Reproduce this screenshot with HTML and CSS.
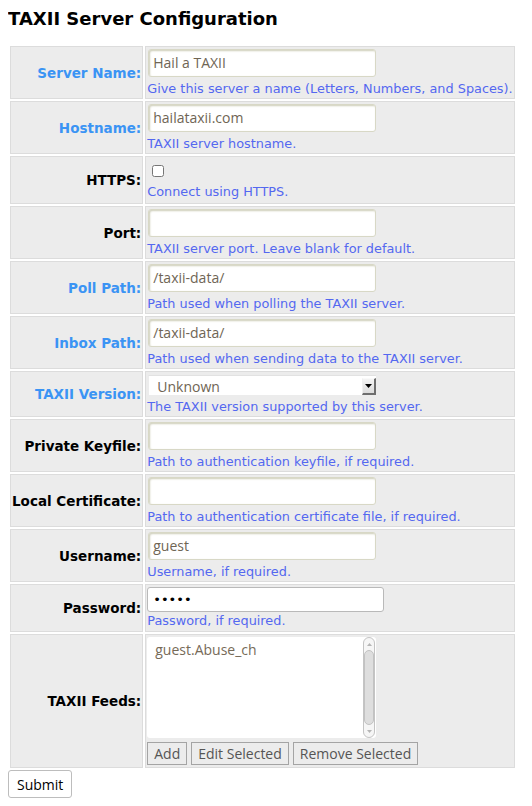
FILE: index.html
```html
<!DOCTYPE html>
<html>
<head>
<meta charset="utf-8">
<title>TAXII Server Configuration</title>
<link rel="stylesheet" href="styles.css">
</head>
<body>
<h1 class="title">TAXII Server Configuration</h1>
<form class="config-form">
<table class="config">
<tr>
<th class="label req">Server Name:</th>
<td class="field"><input class="text" type="text" value="Hail a TAXII"><div class="hint">Give this server a name (Letters, Numbers, and Spaces).</div></td>
</tr>
<tr>
<th class="label req">Hostname:</th>
<td class="field"><input class="text" type="text" value="hailataxii.com"><div class="hint">TAXII server hostname.</div></td>
</tr>
<tr>
<th class="label">HTTPS:</th>
<td class="field"><input class="check" type="checkbox"><div class="hint hint-check">Connect using HTTPS.</div></td>
</tr>
<tr>
<th class="label">Port:</th>
<td class="field"><input class="text" type="text" value=""><div class="hint">TAXII server port. Leave blank for default.</div></td>
</tr>
<tr>
<th class="label req">Poll Path:</th>
<td class="field"><input class="text" type="text" value="/taxii-data/"><div class="hint">Path used when polling the TAXII server.</div></td>
</tr>
<tr>
<th class="label req">Inbox Path:</th>
<td class="field"><input class="text" type="text" value="/taxii-data/"><div class="hint">Path used when sending data to the TAXII server.</div></td>
</tr>
<tr>
<th class="label req">TAXII Version:</th>
<td class="field">
<div class="select"><span class="select-value">Unknown</span><span class="select-arrow"><svg width="7" height="4" viewBox="0 0 7 4"><path d="M0 0H7L3.5 4Z" fill="#000"/></svg></span></div>
<div class="hint">The TAXII version supported by this server.</div></td>
</tr>
<tr>
<th class="label">Private Keyfile:</th>
<td class="field"><input class="text" type="text" value=""><div class="hint">Path to authentication keyfile, if required.</div></td>
</tr>
<tr>
<th class="label">Local Certificate:</th>
<td class="field"><input class="text" type="text" value=""><div class="hint">Path to authentication certificate file, if required.</div></td>
</tr>
<tr>
<th class="label">Username:</th>
<td class="field"><input class="text" type="text" value="guest"><div class="hint">Username, if required.</div></td>
</tr>
<tr>
<th class="label">Password:</th>
<td class="field"><input class="password" type="password" value="guest"><div class="hint hint-pw">Password, if required.</div></td>
</tr>
<tr>
<th class="label">TAXII Feeds:</th>
<td class="field">
<div class="listbox">
<div class="list-items"><div class="list-item">guest.Abuse_ch</div></div>
<div class="scrollbar">
<span class="sb-arrow"><svg width="5" height="3" viewBox="0 0 5 3"><path d="M0 3L2.5 0L5 3Z" fill="#b5b5b5"/></svg></span>
<span class="sb-thumb"></span>
<span class="sb-arrow"><svg width="5" height="3" viewBox="0 0 5 3"><path d="M0 0H5L2.5 3Z" fill="#b5b5b5"/></svg></span>
</div>
</div>
<div class="feed-buttons">
<button type="button" class="btn">Add</button>
<button type="button" class="btn">Edit Selected</button>
<button type="button" class="btn">Remove Selected</button>
</div>
</td>
</tr>
</table>
<button type="submit" class="submit">Submit</button>
</form>
</body>
</html>
```
FILE: styles.css
```css
body {
  margin: 8px;
  background: #fff;
  color: #000;
  font-family: "DejaVu Sans", Verdana, sans-serif;
  font-size: 13px;
}

.title {
  margin: 0 0 15px 0;
  font-size: 18px;
  font-weight: bold;
  line-height: normal;
}

.config-form {
  margin: 0;
}

.config {
  border-collapse: separate;
  border-spacing: 2px;
  margin: 0;
}

.config th,
.config td {
  background: #ececec;
  border: 1px solid #dcdcdc;
  padding: 1px;
  vertical-align: middle;
}

.label {
  text-align: right;
  font-weight: bold;
  font-size: 13.5px;
  color: #000;
  white-space: nowrap;
}

.label.req {
  color: #3b94f4;
}

.field {
  text-align: left;
}

.hint {
  padding-top: 3px;
  color: #5468f0;
  font-size: 12.85px;
  line-height: 17px;
  white-space: nowrap;
}

.hint-check {
  padding-top: 0;
  line-height: 21px;
}

.hint-pw {
  padding-top: 0;
  line-height: 18px;
}

.text {
  display: block;
  box-sizing: border-box;
  width: 228px;
  height: 28px;
  margin: 1px 0 0 1px;
  padding: 0 4px 2px 4px;
  border: 1px solid #d8d8c6;
  border-radius: 3px;
  box-shadow: inset 1px 1px 2px #cdcdb8;
  background: #fff;
  font-family: "Open Sans", "DejaVu Sans", sans-serif;
  font-size: 14px;
  color: #6f6554;
  outline: none;
}

.check {
  display: block;
  width: 12px;
  height: 12px;
  margin: 7px 0 4px 5px;
}

.password {
  display: block;
  box-sizing: border-box;
  width: 237px;
  height: 25px;
  margin: 1px 0 0 0;
  padding: 0 5px;
  border: 1px solid #b9b9b9;
  border-radius: 3px;
  background: #fff;
  font-family: "DejaVu Sans", sans-serif;
  font-size: 13px;
  color: #000;
  outline: none;
}

.select {
  display: flex;
  align-items: center;
  box-sizing: border-box;
  width: 228px;
  height: 20px;
  margin: 2px 0 0 1px;
  padding-left: 8px;
  background: #fff;
  border-top: 1px solid #e2e2e2;
  border-left: 1px solid #ececec;
  font-family: "Open Sans", "DejaVu Sans", sans-serif;
  font-size: 14px;
  color: #6f6554;
}

.select-value {
  flex: 1;
  line-height: 18px;
  padding-top: 2px;
}

.select-arrow {
  display: flex;
  align-items: center;
  justify-content: center;
  box-sizing: border-box;
  width: 14px;
  height: 17px;
  margin-top: 2px;
  background: linear-gradient(#f4f4f4, #dcdcdc);
  border-top: 1px solid #fafafa;
  border-left: 1px solid #f0f0f0;
  border-right: 2px solid #6e6e6e;
  border-bottom: 2px solid #6e6e6e;
}

.listbox {
  display: flex;
  box-sizing: border-box;
  width: 229px;
  height: 101px;
  margin-top: 1px;
  background: #fff;
  border-radius: 3px;
}

.list-items {
  flex: 1;
  padding: 3px 0 0 8px;
  font-family: "Open Sans", "DejaVu Sans", sans-serif;
  font-size: 14px;
  line-height: 19px;
  color: #766a58;
}

.scrollbar {
  display: flex;
  flex-direction: column;
  align-items: center;
  box-sizing: border-box;
  width: 12px;
  margin-right: 1px;
  border: 1px solid #c4c4c4;
  border-radius: 6px;
  background: #f6f6f6;
}

.sb-arrow {
  display: flex;
  align-items: center;
  justify-content: center;
  height: 12px;
}

.sb-thumb {
  flex: 1;
  box-sizing: border-box;
  width: 10px;
  border: 1px solid #c2c2c2;
  border-radius: 5px;
  background: #dedede;
}

.feed-buttons {
  display: flex;
  gap: 4px;
  margin: 4px 0 1px 0;
}

.btn {
  box-sizing: border-box;
  height: 23px;
  padding: 0 6px;
  border: 1px solid #a4a4a4;
  border-radius: 0;
  background: #ececec;
  font-family: "Open Sans", "DejaVu Sans", sans-serif;
  font-size: 14px;
  line-height: 20px;
  color: #555;
}

.submit {
  display: block;
  box-sizing: border-box;
  height: 28px;
  margin: 0;
  padding: 0 8px;
  border: 1px solid #bdbdbd;
  border-radius: 3px;
  background: #fff;
  font-family: "Open Sans", "DejaVu Sans", sans-serif;
  font-size: 14px;
  color: #000;
}
```
